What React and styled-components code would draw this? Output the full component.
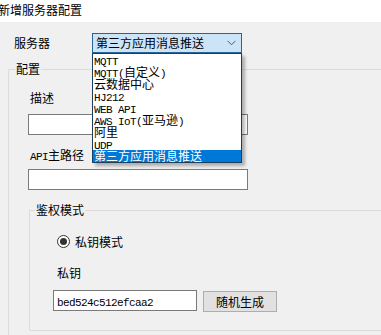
import React from 'react';
import styled, { createGlobalStyle } from 'styled-components';

const Global = createGlobalStyle`
  html, body { margin: 0; padding: 0; background: #f0f0f0; }
  body {
    font-family: "Noto Sans CJK SC", "Microsoft YaHei", sans-serif;
    font-size: 12px;
    color: #000;
  }
  * { box-sizing: border-box; }
`;

const Window = styled.div`
  width: 381px;
  height: 335px;
  overflow: hidden;
  background: #f0f0f0;
`;

const TitleBar = styled.div`
  height: 22px;
  background: #fff;
  line-height: 20px;
  text-indent: -2px;
  white-space: nowrap;
`;

const Main = styled.div`
  padding: 11px 0 0 8px;
`;

const ServerRow = styled.div`
  display: flex;
  align-items: center;
  height: 20px;
  padding-left: 6px;
`;

const RowLabel = styled.span`
  width: 78px;
  line-height: 14px;
`;

const SelectBox = styled.div`
  position: relative;
  width: 150px;
  height: 20px;
  border: 1px solid #2a6496;
  background: #cce4f7;
  display: flex;
  align-items: center;
  justify-content: space-between;
  padding: 0 5px 0 3px;
  line-height: 14px;
`;

const DropList = styled.ul`
  position: absolute;
  top: calc(100% + 1px);
  left: -1px;
  width: 150px;
  margin: 0;
  padding: 0;
  list-style: none;
  background: #fff;
  border: 1px solid #1d3f5e;
  box-shadow: 3px 3px 3px rgba(0, 0, 0, 0.28);
  z-index: 10;
`;

const DropItem = styled.li`
  height: 12px;
  line-height: 12px;
  padding-left: 1px;
  white-space: nowrap;
  background: ${(p) => (p.$selected ? '#0078d7' : 'transparent')};
  color: ${(p) => (p.$selected ? '#fff' : '#000')};
`;

const Latin = styled.span`
  font-family: "Liberation Mono", "DejaVu Sans Mono", monospace;
  font-size: 11px;
  letter-spacing: -0.6px;
`;

const Group = styled.fieldset`
  margin: ${(p) => p.$margin};
  margin-right: -40px;
  border: 1px solid #dcdcdc;
  padding: 0 0 0 ${(p) => p.$pad}px;
  min-width: 0;
`;

const Legend = styled.legend`
  padding: 0 1px;
  line-height: 14px;
  font-size: 12px;
`;

const GroupBody = styled.div`
  padding: ${(p) => p.$padding};
`;

const FieldLabel = styled.div`
  height: 14px;
  line-height: 14px;
  margin-left: ${(p) => p.$indent || 2}px;
  margin-top: ${(p) => p.$top || 0}px;
`;

const TextBox = styled.div`
  width: ${(p) => p.$width}px;
  height: 21px;
  border: 1px solid #7a7a7a;
  background: #fff;
  margin-top: ${(p) => p.$top || 0}px;
  padding-left: 3px;
  line-height: 19px;
  white-space: nowrap;
`;

const RadioRow = styled.div`
  display: flex;
  align-items: center;
  gap: 5px;
  height: 14px;
  margin-left: 4px;
`;

const RadioCircle = styled.span`
  width: 13px;
  height: 13px;
  border-radius: 50%;
  border: 1px solid #333;
  background: #fff;
  display: flex;
  align-items: center;
  justify-content: center;
  &::after {
    content: '';
    width: 7px;
    height: 7px;
    border-radius: 50%;
    background: #333;
  }
`;

const KeyRow = styled.div`
  display: flex;
  align-items: flex-start;
  gap: 6px;
  margin-top: 10px;
`;

const Button = styled.div`
  width: 74px;
  height: 21px;
  margin-top: 1px;
  border: 1px solid #adadad;
  background: #e1e1e1;
  text-align: center;
  line-height: 19px;
`;

const mixed = (s) =>
  s
    .split(/([\x20-\x7E]+)/)
    .filter(Boolean)
    .map((part, i) =>
      /^[\x20-\x7E]+$/.test(part) ? <Latin key={i}>{part}</Latin> : <React.Fragment key={i}>{part}</React.Fragment>
    );

const options = [
  'MQTT',
  'MQTT(自定义)',
  '云数据中心',
  'HJ212',
  'WEB API',
  'AWS IoT(亚马逊)',
  '阿里',
  'UDP',
  '第三方应用消息推送',
];

const Chevron = () => (
  <svg width="9" height="6" viewBox="0 0 9 6">
    <polyline points="0.5,0.8 4.5,4.8 8.5,0.8" fill="none" stroke="#5a5a5a" strokeWidth="1" />
  </svg>
);

export default function App() {
  return (
    <Window>
      <Global />
      <TitleBar>新增服务器配置</TitleBar>
      <Main>
        <ServerRow>
          <RowLabel>服务器</RowLabel>
          <SelectBox>
            <span>第三方应用消息推送</span>
            <Chevron />
            <DropList>
              {options.map((o, i) => (
                <DropItem key={o} $selected={i === options.length - 1}>
                  {mixed(o)}
                </DropItem>
              ))}
            </DropList>
          </SelectBox>
        </ServerRow>
        <Group $margin="9px 0 0 0" $pad={6}>
          <Legend>配置</Legend>
          <GroupBody $padding="15px 0 20px 13px">
            <FieldLabel>描述</FieldLabel>
            <TextBox $width={220} $top={9} />
            <FieldLabel $top={13}>{mixed('API主路径')}</FieldLabel>
            <TextBox $width={220} $top={7} />
            <Group $margin="13px 0 0 1px" $pad={5}>
              <Legend>鉴权模式</Legend>
              <GroupBody $padding="17px 0 18px 18px">
                <RadioRow>
                  <RadioCircle />
                  <span>私钥模式</span>
                </RadioRow>
                <FieldLabel $indent={4} $top={18}>私钥</FieldLabel>
                <KeyRow>
                  <TextBox $width={144}>
                    <Latin>bed524c512efcaa2</Latin>
                  </TextBox>
                  <Button>随机生成</Button>
                </KeyRow>
              </GroupBody>
            </Group>
          </GroupBody>
        </Group>
      </Main>
    </Window>
  );
}
